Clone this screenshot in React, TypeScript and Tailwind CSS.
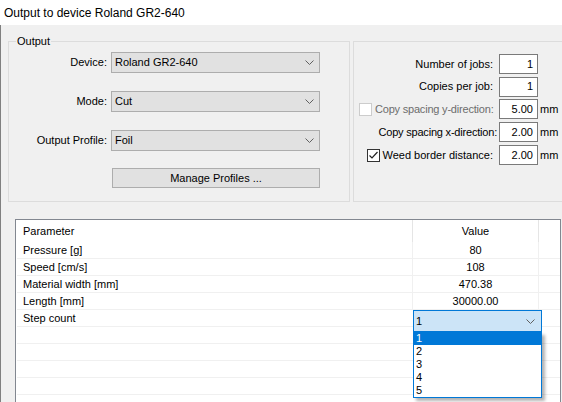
import React from 'react';

const Chevron = ({ className = '' }: { className?: string }) => (
    <svg width="9" height="5" viewBox="0 0 9 5" className={className}>
        <path d="M0.5 0.5 L4.5 4.5 L8.5 0.5" fill="none" stroke="#606060" strokeWidth="1" />
    </svg>
);

const Combo = ({ value }: { value: string }) => (
    <div className="flex items-center justify-between w-[209px] h-[21px] border border-[#adadad] bg-[#e1e1e1] pl-[3px] pr-[5px]">
        <span>{value}</span>
        <Chevron />
    </div>
);

const NumBox = ({ value }: { value: string }) => (
    <div className="shrink-0 w-[39px] h-[20px] border border-[#7a7a7a] bg-white flex items-center justify-end pr-[4px]">{value}</div>
);

const rows = [
    { name: 'Pressure [g]', value: '80' },
    { name: 'Speed [cm/s]', value: '108' },
    { name: 'Material width [mm]', value: '470.38' },
    { name: 'Length [mm]', value: '30000.00' },
];

export default function App() {
    return (
        <div className="w-[562px] h-[402px] overflow-hidden bg-[#f0f0f0] text-[11px] text-black" style={{ fontFamily: '"Liberation Sans", Arial, sans-serif' }}>
            <div className="h-[25px] bg-white flex items-center pl-[4px] text-[12px]">Output to device Roland GR2-640</div>
            <div className="h-[377px] border-l border-[#808080] pl-[7px] pt-[16px]">
                <div className="flex gap-[3px]">
                    {/* Output group */}
                    <div className="relative shrink-0 w-[342px] h-[161px] border border-[#dcdcdc] pt-[10px]">
                        <span className="absolute -top-[7px] left-[7px] px-[1px] bg-[#f0f0f0] leading-[13px]">Output</span>
                        <div className="flex flex-col gap-[18px]">
                            <div className="flex items-center">
                                <span className="w-[98px] text-right">Device:</span>
                                <div className="ml-[4px]"><Combo value="Roland GR2-640" /></div>
                            </div>
                            <div className="flex items-center">
                                <span className="w-[98px] text-right">Mode:</span>
                                <div className="ml-[4px]"><Combo value="Cut" /></div>
                            </div>
                            <div className="flex items-center">
                                <span className="w-[98px] text-right">Output Profile:</span>
                                <div className="ml-[4px]"><Combo value="Foil" /></div>
                            </div>
                        </div>
                        <button className="mt-[17px] ml-[103px] w-[208px] h-[20px] border border-[#adadad] bg-[#e1e1e1] flex items-center justify-center">
                            Manage Profiles ...
                        </button>
                    </div>

                    {/* Copy settings */}
                    <div className="shrink-0 w-[220px] h-[161px] border border-[#dcdcdc] pt-[12px] flex flex-col gap-[3px]">
                        <div className="flex items-center h-[20px]">
                            <span className="w-[145px] shrink-0 text-right pr-[6px]">Number of jobs:</span>
                            <NumBox value="1" />
                        </div>
                        <div className="flex items-center h-[19px]">
                            <span className="w-[145px] shrink-0 text-right pr-[6px]">Copies per job:</span>
                            <NumBox value="1" />
                        </div>
                        <div className="flex items-center h-[20px]">
                            <div className="w-[145px] shrink-0 flex items-center pl-[5px] pr-[2px]">
                                <span className="shrink-0 w-[13px] h-[13px] border border-[#cccccc] bg-white" />
                                <span className="ml-[3px] text-[#6d6d6d] whitespace-nowrap tracking-[-0.2px]">Copy spacing y-direction:</span>
                            </div>
                            <NumBox value="5.00" />
                            <span className="ml-[2px]">mm</span>
                        </div>
                        <div className="flex items-center h-[20px]">
                            <span className="w-[145px] shrink-0 text-right pr-[2px] whitespace-nowrap tracking-[-0.2px]">Copy spacing x-direction:</span>
                            <NumBox value="2.00" />
                            <span className="ml-[2px]">mm</span>
                        </div>
                        <div className="flex items-center h-[20px]">
                            <div className="w-[145px] shrink-0 flex items-center justify-end pr-[6px]">
                                <span className="shrink-0 w-[13px] h-[13px] border border-[#333333] bg-white flex items-center justify-center">
                                    <svg width="11" height="11" viewBox="0 0 11 11">
                                        <path d="M1.5 5.5 L4 8 L9.5 2" fill="none" stroke="#222" strokeWidth="1.2" />
                                    </svg>
                                </span>
                                <span className="ml-[3px] whitespace-nowrap">Weed border distance:</span>
                            </div>
                            <NumBox value="2.00" />
                            <span className="ml-[2px]">mm</span>
                        </div>
                    </div>
                </div>

                {/* Parameter table */}
                <div className="relative mt-[17px] ml-[7px] w-[546px] h-[200px] border border-[#828790] bg-white">
                    <div className="flex h-[22px] items-center">
                        <div className="w-[396px] pl-[7px]">Parameter</div>
                        <div className="w-[127px] h-full border-l border-[#e5e5e5] border-r flex items-center justify-center">Value</div>
                    </div>
                    {rows.map((r) => (
                        <div key={r.name} className="flex h-[17px] border-b border-[#f0f0f0] ml-[1px]">
                            <div className="w-[395px] pl-[6px] flex items-center">{r.name}</div>
                            <div className="w-[127px] border-l border-r border-[#f0f0f0] flex items-center justify-center">{r.value}</div>
                        </div>
                    ))}
                    <div className="flex h-[17px] border-b border-[#f0f0f0] ml-[1px]">
                        <div className="w-[395px] pl-[6px] flex items-center">Step count</div>
                    </div>
                    {[0, 1, 2, 3, 4].map((i) => (
                        <div key={i} className="h-[17px] border-b border-[#f0f0f0] ml-[1px]" />
                    ))}

                    {/* open step combo */}
                    <div className="absolute left-[397px] top-[90px] w-[129px]">
                        <div className="h-[22px] border border-[#0078d7] bg-[#cce4f7] flex items-center justify-between pl-[2px] pr-[6px]">
                            <span>1</span>
                            <Chevron />
                        </div>
                        <div className="border border-[#0078d7] border-t-0 bg-white shadow-[3px_3px_3px_rgba(0,0,0,0.3)]">
                            <div className="h-[13px] bg-[#0078d7] text-white flex items-center pl-[2px]">1</div>
                            {['2', '3', '4', '5'].map((n) => (
                                <div key={n} className="h-[13px] flex items-center pl-[2px]">{n}</div>
                            ))}
                        </div>
                    </div>
                </div>
            </div>
        </div>
    );
}
